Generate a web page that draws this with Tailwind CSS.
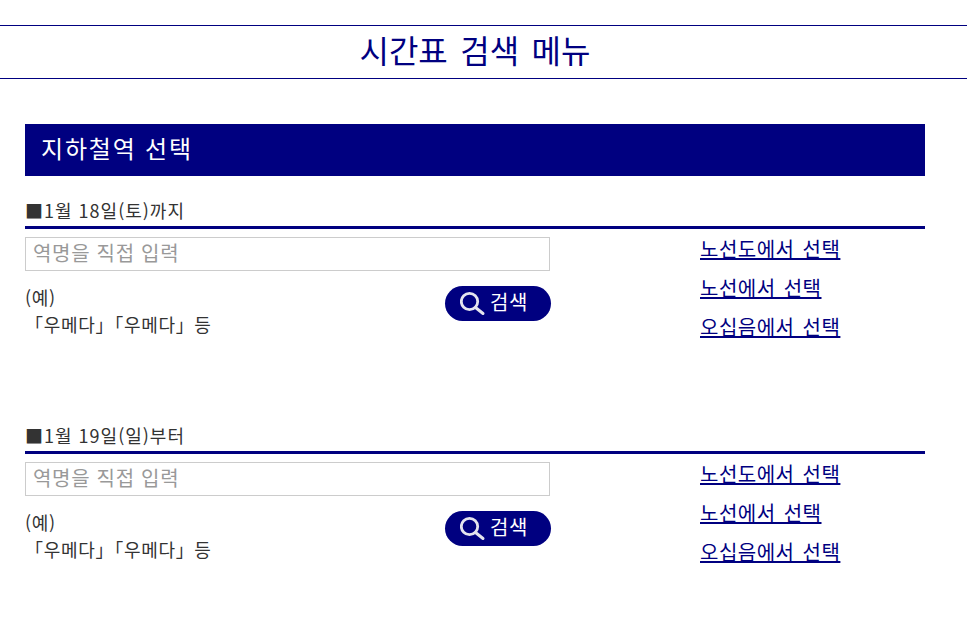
<!DOCTYPE html>
<html lang="ko">
<head>
  <meta charset="UTF-8" />
  <title>시간표 검색 메뉴</title>
  <script src="https://cdn.jsdelivr.net/npm/@tailwindcss/browser@4"></script>
</head>
<body class="bg-white text-[#333] font-['Noto_Sans_CJK_KR','Liberation_Sans',sans-serif]">

  <h1 class="mt-[25px] h-[54px] pr-[17px] border-y border-[#000080] text-center text-[32px] leading-[46px] [word-spacing:3.5px] text-[#000080]">시간표 검색 메뉴</h1>

  <main class="w-[900px] ml-[25px]">
    <h2 class="mt-[45px] h-[52px] pl-4 bg-[#000080] text-white text-2xl leading-[48px] tracking-[1.8px]">지하철역 선택</h2>

    <section class="mt-[24px] h-[225px]">
      <h3 class="h-[26px] border-b-[3px] border-[#000080] text-lg leading-[20px] tracking-[1px] box-content">■1월 18일(토)까지</h3>
      <div class="flex">
        <div class="w-[526px] pt-2">
          <input type="text" placeholder="역명을 직접 입력" class="block w-[525px] h-[34px] px-[7px] pb-1 border border-[#ccc] text-xl tracking-[0.7px] outline-none placeholder:text-[#999]" />
          <div class="flex justify-between mt-[15px]">
            <p class="-mt-[2px] text-lg leading-[27px] tracking-[0.7px]">(예)<br />「우메다」「우메다」등</p>
            <button class="flex items-center gap-1 w-[106px] h-[35px] pl-[15px] pb-1 rounded-full bg-[#000080] text-white text-xl tracking-[0.5px]">
              <svg class="w-[26px] h-[26px] mt-1" viewBox="0 0 26 26" fill="none" stroke="#e4e4ee"><circle cx="9.5" cy="10.5" r="8.2" stroke-width="2.8" /><path d="M15.5 16.5l7.5 6" stroke-width="3" stroke-linecap="round" /></svg>
              검색
            </button>
          </div>
        </div>
        <ul class="ml-[149px] pt-[6px] text-xl tracking-[0.5px] [word-spacing:2px]">
          <li class="h-[39px]"><a href="#" class="underline text-[#000080]">노선도에서 선택</a></li>
          <li class="h-[39px]"><a href="#" class="underline text-[#000080]">노선에서 선택</a></li>
          <li class="h-[39px]"><a href="#" class="underline text-[#000080]">오십음에서 선택</a></li>
        </ul>
      </div>
    </section>

    <section class="h-[190px]">
      <h3 class="h-[26px] border-b-[3px] border-[#000080] text-lg leading-[20px] tracking-[1px] box-content">■1월 19일(일)부터</h3>
      <div class="flex">
        <div class="w-[526px] pt-2">
          <input type="text" placeholder="역명을 직접 입력" class="block w-[525px] h-[34px] px-[7px] pb-1 border border-[#ccc] text-xl tracking-[0.7px] outline-none placeholder:text-[#999]" />
          <div class="flex justify-between mt-[15px]">
            <p class="-mt-[2px] text-lg leading-[27px] tracking-[0.7px]">(예)<br />「우메다」「우메다」등</p>
            <button class="flex items-center gap-1 w-[106px] h-[35px] pl-[15px] pb-1 rounded-full bg-[#000080] text-white text-xl tracking-[0.5px]">
              <svg class="w-[26px] h-[26px] mt-1" viewBox="0 0 26 26" fill="none" stroke="#e4e4ee"><circle cx="9.5" cy="10.5" r="8.2" stroke-width="2.8" /><path d="M15.5 16.5l7.5 6" stroke-width="3" stroke-linecap="round" /></svg>
              검색
            </button>
          </div>
        </div>
        <ul class="ml-[149px] pt-[6px] text-xl tracking-[0.5px] [word-spacing:2px]">
          <li class="h-[39px]"><a href="#" class="underline text-[#000080]">노선도에서 선택</a></li>
          <li class="h-[39px]"><a href="#" class="underline text-[#000080]">노선에서 선택</a></li>
          <li class="h-[39px]"><a href="#" class="underline text-[#000080]">오십음에서 선택</a></li>
        </ul>
      </div>
    </section>
  </main>

</body>
</html>
